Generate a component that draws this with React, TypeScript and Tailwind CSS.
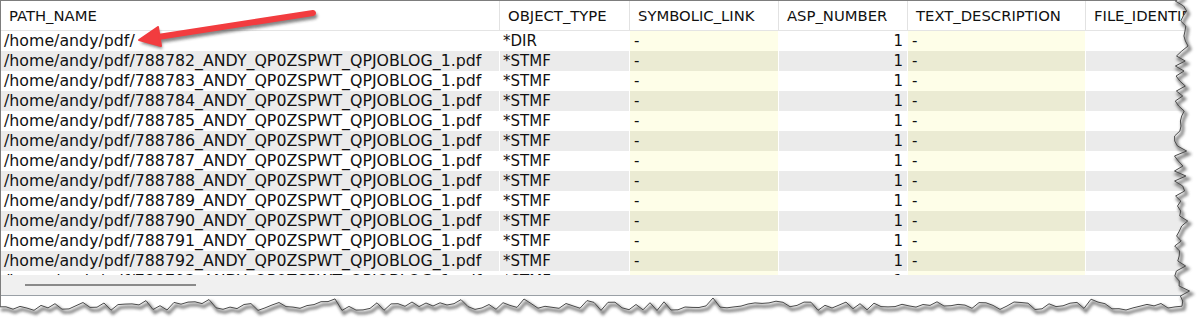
import React from 'react';

const columns = [
  { key: 'path', title: 'PATH_NAME', width: 'w-[499px]' },
  { key: 'type', title: 'OBJECT_TYPE', width: 'w-[130px]' },
  { key: 'link', title: 'SYMBOLIC_LINK', width: 'w-[149px]' },
  { key: 'asp', title: 'ASP_NUMBER', width: 'w-[129px]' },
  { key: 'desc', title: 'TEXT_DESCRIPTION', width: 'w-[178px]' },
  { key: 'ident', title: 'FILE_IDENTIFIER', width: 'flex-1' },
];

const rows = [
  { path: '/home/andy/pdf/', type: '*DIR' },
  ...Array.from({ length: 12 }, (_, i) => ({
    path: `/home/andy/pdf/${788782 + i}_ANDY_QP0ZSPWT_QPJOBLOG_1.pdf`,
    type: '*STMF',
  })),
];

// deterministic noise for the torn paper edge
const rnd = (i: number) => {
  const x = Math.sin(i * 127.1 + 311.7) * 43758.5453;
  return x - Math.floor(x);
};

const rightEdge: [number, number][] = [];
for (let i = 0, y = -4; y < 304; i++, y += 5) {
  rightEdge.push([1180 + (rnd(i) - 0.5) * 12 + (i % 7 === 3 ? 5 : 0), y]);
}
const bottomEdge: [number, number][] = [];
for (let i = 0, x = 1182; x > -8; i++, x -= 7) {
  bottomEdge.push([x, 306 + (rnd(i + 200) - 0.5) * 9 - (i % 9 === 4 ? 4 : 0)]);
}
const edgePts = [...rightEdge, ...bottomEdge];
const edgeLine = edgePts.map(([x, y], i) => `${i ? 'L' : 'M'}${x.toFixed(1)} ${y.toFixed(1)}`).join(' ');
const outside = `${edgeLine} L-8 330 L1210 330 L1210 -4 Z`;

const TornEdge: React.FC = () => (
  <svg className="absolute inset-0 pointer-events-none" width="1203" height="324">
    <defs>
      <filter id="blur" x="-10%" y="-10%" width="120%" height="120%">
        <feGaussianBlur stdDeviation="1.6" />
      </filter>
    </defs>
    <path d={outside} fill="#ffffff" />
    <path d={edgeLine} fill="none" stroke="#555" strokeWidth="3" filter="url(#blur)" transform="translate(2 3)" opacity="0.75" />
    <path d={edgeLine} fill="none" stroke="#4a4a4a" strokeWidth="1" />
  </svg>
);

const Arrow: React.FC = () => (
  <svg className="absolute inset-0 pointer-events-none" width="1203" height="324">
    <defs>
      <filter id="ashadow" x="-20%" y="-50%" width="140%" height="200%">
        <feGaussianBlur stdDeviation="1.5" />
      </filter>
    </defs>
    <g transform="translate(1.5 3)" filter="url(#ashadow)" opacity="0.55">
      <line x1="313" y1="13" x2="158" y2="37" stroke="#222" strokeWidth="6" strokeLinecap="round" />
      <polygon points="139,40 161,46 158,27" fill="#222" />
    </g>
    <line x1="313" y1="13" x2="158" y2="37" stroke="#f23c3f" strokeWidth="6" strokeLinecap="round" />
    <polygon points="139,40 161,46 158,27" fill="#f23c3f" stroke="#f23c3f" strokeWidth="2" strokeLinejoin="round" />
  </svg>
);

const App: React.FC = () => {
  return (
    <div className="relative w-[1203px] h-[324px] bg-white overflow-hidden text-[#111]">
      <div className="w-[1195px] border-t border-l border-[#7d7d7d] bg-white">
        {/* Header */}
        <div className="flex h-[30px] border-b border-[#e4e4e4] font-['DejaVu_Sans',sans-serif] text-[14.8px]">
          {columns.map((c) => (
            <div
              key={c.key}
              className={`${c.width} shrink-0 border-r border-[#e2e2e2] pl-[8px] pt-[1px] flex items-center whitespace-nowrap overflow-hidden`}
            >
              {c.title}
            </div>
          ))}
        </div>

        {/* Body */}
        <div className="h-[244px] overflow-hidden font-['DejaVu_Sans',sans-serif]">
          {rows.map((r, i) => {
            const grey = i % 2 === 1;
            return (
              <div key={i} className="flex h-[20px] leading-[20px]">
                <div className={`w-[499px] shrink-0 border-r border-white pl-[3px] text-[15.8px] whitespace-nowrap overflow-hidden ${grey ? 'bg-[#ebebeb]' : 'bg-white'}`}>
                  {r.path}
                </div>
                <div className={`w-[130px] shrink-0 border-r border-white pl-[3px] text-[15px] ${grey ? 'bg-[#ebebeb]' : 'bg-white'}`}>
                  {r.type}
                </div>
                <div className={`w-[149px] shrink-0 border-r border-white pl-[4px] text-[15px] ${grey ? 'bg-[#ebebd3]' : 'bg-[#fefee8]'}`}>
                  -
                </div>
                <div className={`w-[129px] shrink-0 border-r border-white pr-[4px] text-right text-[15px] ${grey ? 'bg-[#ebebeb]' : 'bg-white'}`}>
                  1
                </div>
                <div className={`w-[178px] shrink-0 border-r border-white pl-[4px] text-[15px] ${grey ? 'bg-[#ebebd3]' : 'bg-[#fefee8]'}`}>
                  -
                </div>
                <div className={`flex-1 ${grey ? 'bg-[#ebebeb]' : 'bg-white'}`} />
              </div>
            );
          })}
        </div>

        {/* Horizontal scrollbar */}
        <div className="h-[21px] bg-[#f0f0f0] border-b border-[#9aa0a6] pt-[9px] pl-[24px]">
          <div className="w-[171px] h-[2px] bg-[#8a8a8a]" />
        </div>
        <div className="h-[20px] bg-white" />
      </div>

      <Arrow />
      <TornEdge />
    </div>
  );
};

export default App;
